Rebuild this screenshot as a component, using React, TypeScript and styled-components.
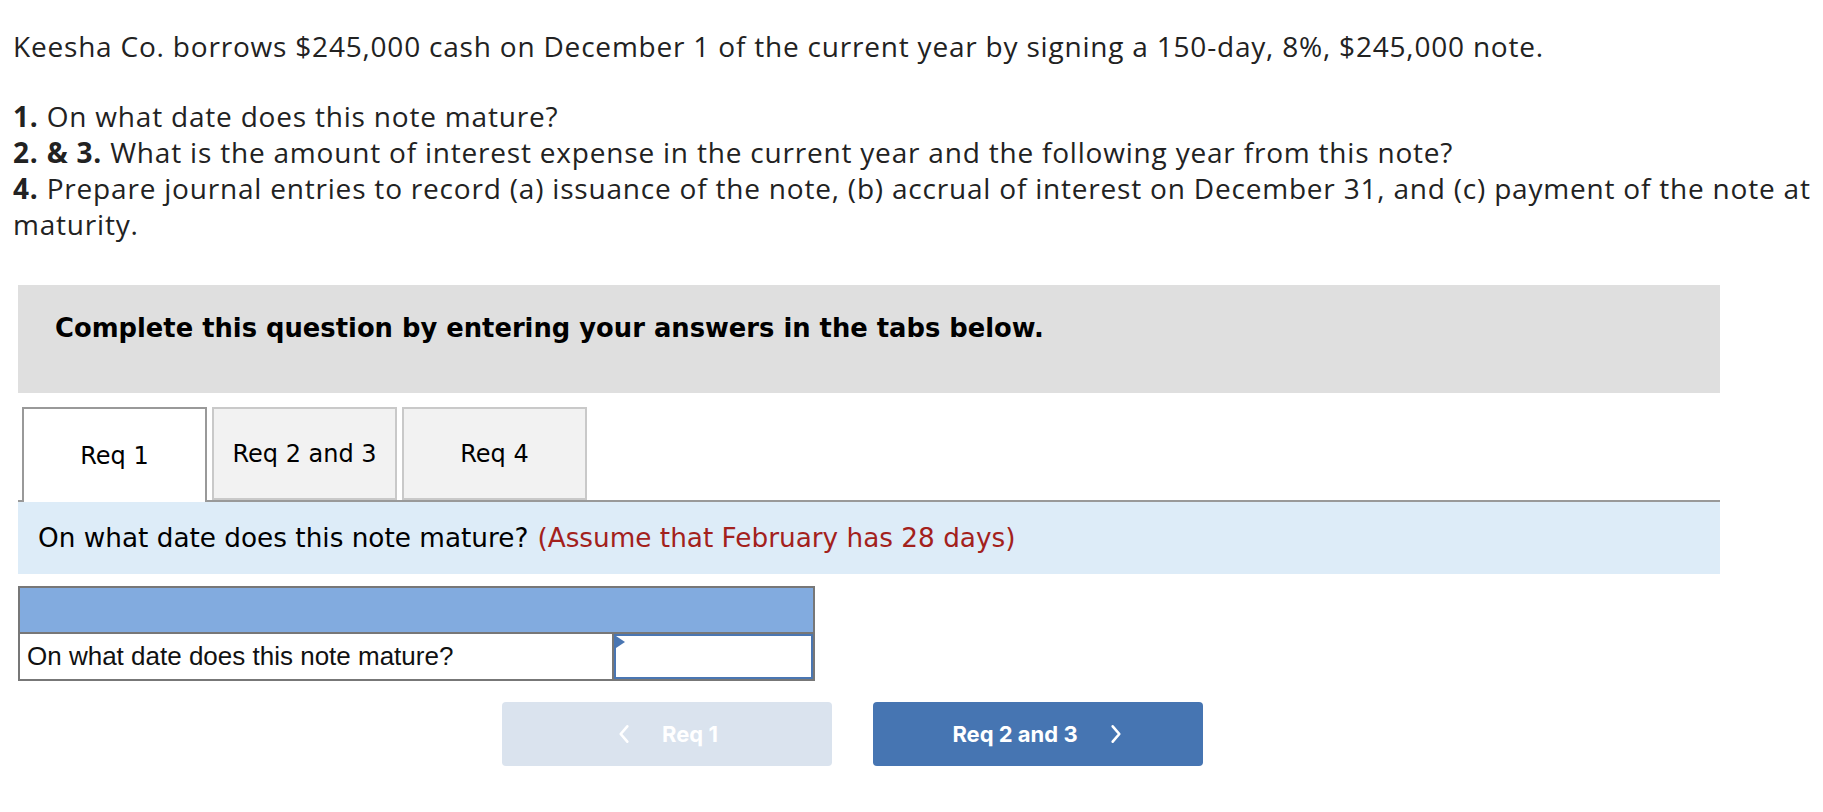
import styled, { createGlobalStyle } from 'styled-components';

const GlobalStyle = createGlobalStyle`
  html, body {
    margin: 0;
    padding: 0;
    background: #fff;
  }
  body {
    font-family: "Open Sans", "Liberation Sans", sans-serif;
    color: #1c1c1c;
  }
`;

const Page = styled.div`
  width: 1823px;
  padding: 28px 0 0 0;
  box-sizing: border-box;
`;

const Prompt = styled.div`
  padding: 0 0 0 13px;
  font-family: "Open Sans", "Liberation Sans", sans-serif;
  font-size: 28px;
  letter-spacing: 0.8px;
  line-height: 36px;
  color: #222;
`;

const Para = styled.p`
  margin: 0 0 34px 0;
`;

const List = styled.div`
  margin: 0;
  b {
    font-weight: 700;
  }
`;

const Widget = styled.div`
  width: 1702px;
  margin: 43px 0 0 18px;
  font-family: "DejaVu Sans", Verdana, sans-serif;
`;

const Instructions = styled.div`
  background: #dfdfdf;
  height: 108px;
  box-sizing: border-box;
  padding: 28px 0 0 37px;
  font-size: 25.8px;
  font-weight: 700;
  color: #000;
`;

const TabStrip = styled.div`
  display: flex;
  gap: 5px;
  margin-top: 14px;
  padding-left: 4px;
  border-bottom: 2px solid #999;
  height: 95px;
  box-sizing: border-box;
`;

const Tab = styled.div<{ active?: boolean }>`
  width: 185px;
  height: ${({ active }) => (active ? '95px' : '93px')};
  box-sizing: border-box;
  border: 2px solid ${({ active }) => (active ? '#999' : '#c9c9c9')};
  border-bottom: ${({ active }) => (active ? 'none' : '2px solid #c9c9c9')};
  background: ${({ active }) => (active ? '#fff' : '#f2f2f2')};
  display: flex;
  align-items: center;
  justify-content: center;
  font-size: 24px;
  color: #000;
  position: relative;
  z-index: 1;
`;

const InfoBand = styled.div`
  background: #ddecf8;
  height: 72px;
  box-sizing: border-box;
  padding: 0 0 0 20px;
  display: flex;
  align-items: center;
  font-size: 26.3px;
  color: #000;
`;

const Hint = styled.span`
  color: #a3211c;
  margin-left: 9px;
`;

const AnswerTable = styled.div`
  margin-top: 12px;
  width: 797px;
  border: 2px solid #777;
  box-sizing: border-box;
  font-family: "Liberation Sans", Arial, sans-serif;
`;

const HeaderRow = styled.div`
  height: 44px;
  background: #82abdf;
  border-bottom: 2px solid #777;
`;

const Row = styled.div`
  display: grid;
  grid-template-columns: 594px 1fr;
  height: 45px;
`;

const LabelCell = styled.div`
  display: flex;
  align-items: center;
  padding-left: 7px;
  font-size: 26px;
  color: #111;
  border-right: 2px solid #777;
`;

const InputCell = styled.div`
  position: relative;
  border: 2px solid #4a76b2;
  background: #fff;
`;

const Marker = styled.div`
  position: absolute;
  top: 0;
  left: 0;
  width: 0;
  height: 0;
  border-top: 6px solid transparent;
  border-bottom: 6px solid transparent;
  border-left: 9px solid #4a76b2;
`;

const Nav = styled.div`
  display: flex;
  gap: 41px;
  margin-top: 21px;
  padding-left: 484px;
`;

const NavButton = styled.div<{ primary?: boolean }>`
  width: 330px;
  height: 64px;
  border-radius: 4px;
  background: ${({ primary }) => (primary ? '#4675b2' : '#dae3ee')};
  color: #fff;
  display: flex;
  align-items: center;
  justify-content: center;
  gap: 30px;
  font-family: Inter, "Liberation Sans", sans-serif;
  font-size: 22px;
  font-weight: 700;
  svg {
    width: 16px;
    height: 22px;
  }
`;

const Chevron = ({ dir }: { dir: 'left' | 'right' }) => (
  <svg viewBox="0 0 12 20" fill="none" stroke="#fff" strokeWidth="2.4" strokeLinecap="round" strokeLinejoin="round">
    {dir === 'left' ? <path d="M9 3 L3 10 L9 17" /> : <path d="M3 3 L9 10 L3 17" />}
  </svg>
);

export default function App() {
  return (
    <Page>
      <GlobalStyle />
      <Prompt>
        <Para>
          Keesha Co. borrows $245,000 cash on December 1 of the current year by signing a 150-day, 8%, $245,000 note.
        </Para>
        <List>
          <div><b>1.</b> On what date does this note mature?</div>
          <div><b>2. &amp; 3.</b> What is the amount of interest expense in the current year and the following year from this note?</div>
          <div>
            <b>4.</b> Prepare journal entries to record (a) issuance of the note, (b) accrual of interest on December 31, and (c) payment of the note at maturity.
          </div>
        </List>
      </Prompt>

      <Widget>
        <Instructions>Complete this question by entering your answers in the tabs below.</Instructions>
        <TabStrip>
          <Tab active>Req 1</Tab>
          <Tab>Req 2 and 3</Tab>
          <Tab>Req 4</Tab>
        </TabStrip>
        <InfoBand>
          On what date does this note mature?
          <Hint>(Assume that February has 28 days)</Hint>
        </InfoBand>
        <AnswerTable>
          <HeaderRow />
          <Row>
            <LabelCell>On what date does this note mature?</LabelCell>
            <InputCell>
              <Marker />
            </InputCell>
          </Row>
        </AnswerTable>
        <Nav>
          <NavButton>
            <Chevron dir="left" />
            Req 1
          </NavButton>
          <NavButton primary>
            Req 2 and 3
            <Chevron dir="right" />
          </NavButton>
        </Nav>
      </Widget>
    </Page>
  );
}
